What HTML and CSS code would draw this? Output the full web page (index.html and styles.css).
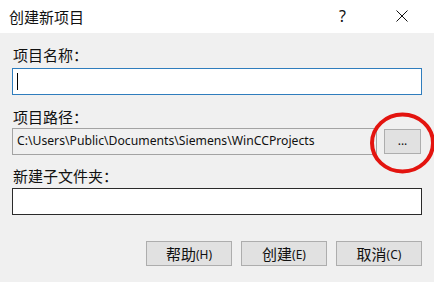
FILE: index.html
```html
<!DOCTYPE html>
<html lang="zh-CN">
<head>
    <meta charset="UTF-8">
    <title>创建新项目</title>
    <link rel="stylesheet" href="styles.css">
</head>
<body>
    <div class="dialog">
        <div class="titlebar">
            <span class="title">创建新项目</span>
            <span class="help">?</span>
            <span class="close">
                <svg width="12" height="12" viewBox="0 0 12 12">
                    <path d="M0.5 0.5 L11.5 11.5 M11.5 0.5 L0.5 11.5" stroke="#111" stroke-width="1" fill="none"/>
                </svg>
            </span>
        </div>

        <div class="content">
            <div class="label first">项目名称：</div>
            <div class="field active"><span class="caret"></span></div>

            <div class="label">项目路径：</div>
            <div class="path-row">
                <div class="field readonly">C:\Users\Public\Documents\Siemens\WinCCProjects</div>
                <button class="browse">...</button>
            </div>

            <div class="label third">新建子文件夹：</div>
            <div class="field dark"></div>

            <div class="footer">
                <button class="btn">帮助<span class="key">(H)</span></button>
                <button class="btn">创建<span class="key">(E)</span></button>
                <button class="btn">取消<span class="key">(C)</span></button>
            </div>
        </div>

        <svg class="mark" width="66" height="64" viewBox="0 0 66 64">
            <ellipse cx="32.5" cy="31" rx="30.5" ry="28.5" stroke="#e3140f" stroke-width="4" fill="none"/>
        </svg>
    </div>
</body>
</html>
```

FILE: styles.css
```css
body {
    margin: 0;
    width: 434px;
    height: 282px;
    background-color: #f0f0f0;
    font-family: "Noto Sans CJK SC", "Noto Sans", sans-serif;
    overflow: hidden;
}

.dialog {
    position: relative;
    width: 434px;
    height: 282px;
}

.titlebar {
    height: 33px;
    background-color: white;
    display: flex;
    align-items: center;
    padding-left: 9px;
    color: #111;
}

.title {
    font-size: 15px;
    flex: 1;
    margin-top: -1px;
}

.help {
    font-family: "Noto Sans", sans-serif;
    font-size: 16px;
    width: 20px;
    margin-right: 37px;
    margin-top: -1px;
}

.close {
    display: flex;
    width: 12px;
    margin-right: 26px;
    margin-top: -2px;
}

.content {
    padding: 0 12px;
}

.label {
    height: 20px;
    line-height: 20px;
    font-size: 15px;
    color: #111;
    margin-top: 12px;
    margin-bottom: 1px;
    padding-left: 1px;
}

.label.first {
    margin-bottom: 3px;
}

.label.third {
    margin-top: 11px;
    margin-bottom: 2px;
}

.field {
    height: 27px;
    box-sizing: border-box;
    border: 1px solid #7a7a7a;
    background-color: white;
    display: flex;
    align-items: center;
}

.field.active {
    border-color: #2f7dbd;
}

.field.dark {
    border-color: #2a2a2a;
}

.caret {
    width: 1px;
    height: 17px;
    background-color: #000;
    margin-left: 4px;
}

.path-row {
    display: flex;
    align-items: center;
}

.field.readonly {
    width: 365px;
    background-color: #f0f0f0;
    border-color: #a3a3a3;
    font-family: "Noto Sans", sans-serif;
    font-size: 12.2px;
    color: #111;
    padding-left: 4px;
    padding-bottom: 2px;
    white-space: nowrap;
}

.browse {
    margin-left: 7px;
    width: 37px;
    height: 25px;
    background-color: #e1e1e1;
    border: 1px solid #adadad;
    font-size: 12px;
    font-family: "Noto Sans", sans-serif;
    color: #111;
    padding: 0 0 2px 0;
}

.footer {
    display: flex;
    justify-content: flex-end;
    gap: 9px;
    margin-top: 26px;
}

.btn {
    width: 86px;
    height: 25px;
    background-color: #e1e1e1;
    border: 1px solid #adadad;
    font-family: "Noto Sans CJK SC", sans-serif;
    font-size: 15px;
    color: #111;
    padding: 0;
    display: flex;
    align-items: center;
    justify-content: center;
    line-height: 1;
}

.key {
    font-family: "Noto Sans", sans-serif;
    font-size: 12px;
    margin-top: 2px;
}

.mark {
    position: absolute;
    left: 370px;
    top: 112px;
}
```
